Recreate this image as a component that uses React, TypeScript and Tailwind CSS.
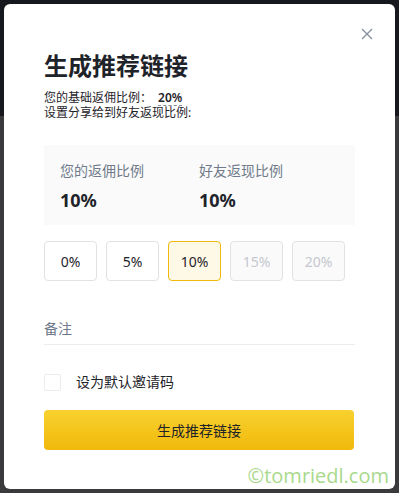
import { useState } from "react";

const rates = [
  { label: "0%", disabled: false },
  { label: "5%", disabled: false },
  { label: "10%", disabled: false },
  { label: "15%", disabled: true },
  { label: "20%", disabled: true },
];

export default function App() {
  const [selected, setSelected] = useState("10%");
  const [isDefault, setIsDefault] = useState(false);

  return (
    <div
      className="w-[399px] h-[493px] p-[4px] bg-[linear-gradient(to_bottom,#17181d_116px,#3a3a3c_116px)] overflow-hidden"
      style={{ fontFamily: '"Noto Sans", "Noto Sans CJK SC", sans-serif' }}
    >
      <div className="relative w-[391px] h-[485px] bg-white rounded-[6px] pl-[40px] pt-[46px]">
        <button className="absolute right-[18px] top-[20px] w-[20px] h-[20px] flex items-center justify-center">
          <svg width="12" height="12" viewBox="0 0 12 12" fill="none">
            <path d="M1 1L11 11M11 1L1 11" stroke="#848e9c" strokeWidth="1.3" />
          </svg>
        </button>

        <div className="w-[311px]">
          <h1 className="text-[24px] leading-[32px] font-bold text-[#1e2329]">生成推荐链接</h1>
          <div className="mt-[8px] text-[12px] leading-[15px] text-[#1e2329]">
            您的基础返佣比例：
            <span className="ml-[6px] font-semibold underline decoration-dashed decoration-[#848e9c] underline-offset-[3px]">
              20%
            </span>
          </div>
          <div className="text-[12px] leading-[15px] text-[#1e2329]">设置分享给到好友返现比例:</div>

          <div className="mt-[25px] bg-[#fafafa] h-[80px] px-[16px] pt-[16px] flex">
            <div className="w-[139px]">
              <div className="text-[14px] leading-[20px] text-[#707a8a]">您的返佣比例</div>
              <div className="mt-[7px] text-[18px] leading-[24px] font-bold text-[#1e2329]">10%</div>
            </div>
            <div>
              <div className="text-[14px] leading-[20px] text-[#707a8a]">好友返现比例</div>
              <div className="mt-[7px] text-[18px] leading-[24px] font-bold text-[#1e2329]">10%</div>
            </div>
          </div>

          <div className="mt-[16px] flex gap-[9px]">
            {rates.map((r) => {
              const active = selected === r.label;
              return (
                <button
                  key={r.label}
                  disabled={r.disabled}
                  onClick={() => setSelected(r.label)}
                  className={
                    r.disabled
                      ? "w-[53px] h-[40px] rounded-[4px] border border-[#e0e2e6] bg-[#fafafa] text-[14px] text-[#c5c8ce]"
                      : active
                      ? "w-[53px] h-[40px] rounded-[4px] border border-[#f0b90b] bg-[#fef8e6] text-[14px] text-[#1e2329]"
                      : "w-[53px] h-[40px] rounded-[4px] border border-[#e0e2e6] bg-white text-[14px] text-[#1e2329]"
                  }
                >
                  {r.label}
                </button>
              );
            })}
          </div>

          <div className="mt-[38px] border-b border-[#eaecef] pb-[5px]">
            <input
              placeholder="备注"
              className="block w-full text-[14px] leading-[20px] h-[20px] text-[#1e2329] placeholder:text-[#707a8a] outline-none"
            />
          </div>

          <div className="mt-[27px] flex items-center gap-[15px] cursor-pointer" onClick={() => setIsDefault(!isDefault)}>
            <span
              className={
                isDefault
                  ? "block w-[17px] h-[17px] rounded-[2px] border border-[#f0b90b] bg-[#f0b90b]"
                  : "block w-[17px] h-[17px] rounded-[2px] border border-[#eaecef] bg-white"
              }
            />
            <span className="text-[14px] leading-[20px] text-[#1e2329]">设为默认邀请码</span>
          </div>

          <button className="block mt-[18px] w-[310px] h-[40px] rounded-[4px] bg-[linear-gradient(to_bottom,#f8d12f,#f0b90b)] text-[14px] text-[#1e2329]">
            生成推荐链接
          </button>
        </div>

        <div
          className="absolute right-[6px] bottom-[0px] text-[20px] leading-[26px] text-[#a9d98c]"
          style={{ fontFamily: '"Open Sans", sans-serif' }}
        >
          ©tomriedl.com
        </div>
      </div>
    </div>
  );
}
